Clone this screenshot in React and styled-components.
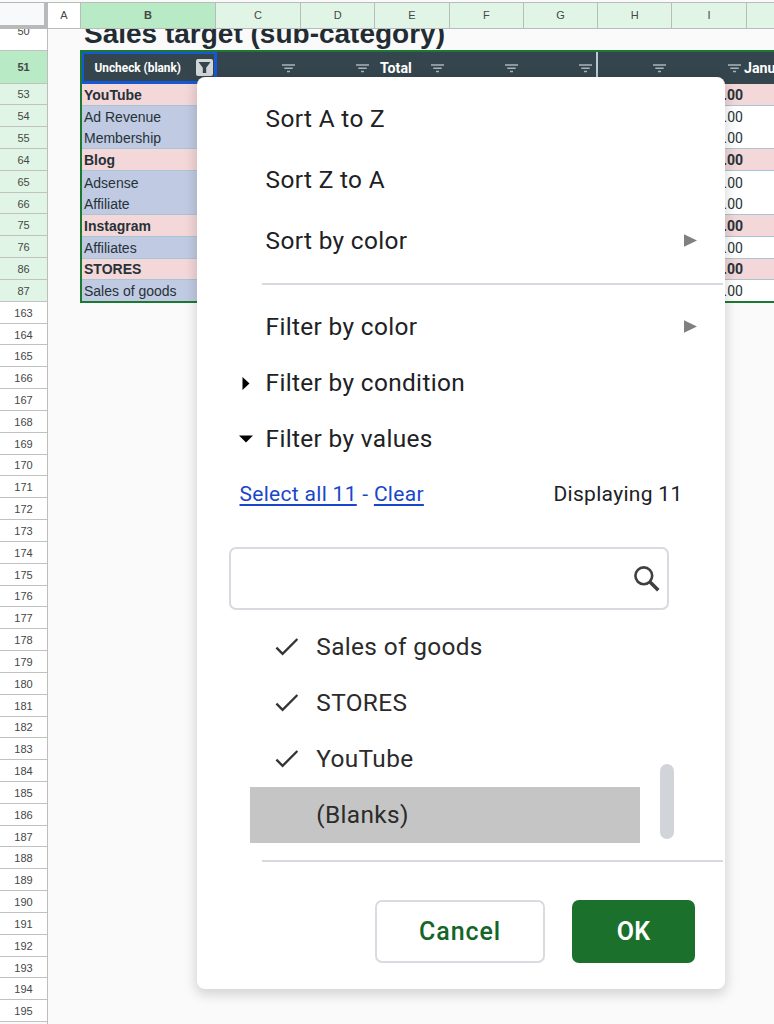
import React from "react";
import styled, { createGlobalStyle } from "styled-components";

const GlobalStyle = createGlobalStyle`
  * {
    box-sizing: border-box;
  }
  body {
    margin: 0;
    background: #fafafa;
  }
`;

const ROW = 21.84;

const Page = styled.div`
  position: relative;
  width: 774px;
  height: 1024px;
  overflow: hidden;
  background: #fafafa;
  font-family: "Liberation Sans", Arial, sans-serif;
  color: #263238;
`;

const ColumnHeader = styled.div`
  display: flex;
  height: 29px;
  border-top: 1px solid #fafafa;
  padding-top: 1px;
  background: #fafafa;
`;

const Corner = styled.div`
  flex: none;
  width: 48px;
  border-top: 1px solid #b7b7b7;
  border-right: 4px solid #b9b9b9;
  border-bottom: 4px solid #b9b9b9;
  background: #f8f9fa;
`;

const Column = styled.div`
  flex: none;
  display: flex;
  align-items: center;
  justify-content: center;
  width: ${(p) => p.$width}px;
  border: 1px solid #b9bdb9;
  border-left: none;
  padding-bottom: 1px;
  font-size: 11px;
  line-height: 12px;
  font-weight: ${(p) => (p.$tone === "active" ? "bold" : "normal")};
  color: #444746;
  background: ${(p) =>
    p.$tone === "active" ? "#b7eac5" : p.$tone === "plain" ? "#fff" : "#e1f5e6"};
`;

const Body = styled.div`
  display: flex;
  height: 995px;
  overflow: hidden;
`;

const RowNumbers = styled.div`
  flex: none;
  width: 48px;
  margin-top: -18px;
  border-right: 1px solid #bdbdbd;
`;

const RowNumber = styled.div`
  display: flex;
  align-items: center;
  justify-content: center;
  height: ${(p) => p.$height || ROW}px;
  padding-top: 1px;
  border-bottom: 1px solid #bfc2bf;
  font-size: 11px;
  font-weight: ${(p) => (p.$tone === "active" ? "bold" : "normal")};
  color: #444746;
  background: ${(p) =>
    p.$tone === "active" ? "#b7eac5" : p.$tone === "picked" ? "#e1f5e6" : "#fff"};
`;

const Cells = styled.div`
  flex: none;
  width: 760px;
  padding-left: 32px;
`;

const Title = styled.h1`
  height: 21px;
  margin: 0 0 0 4px;
  padding-top: 5px;
  font-size: 28px;
  line-height: 0;
  white-space: nowrap;
  color: #222d33;
`;

const Table = styled.div`
  border: 2px solid #1b7a32;
  border-right: none;
`;

const HeadRow = styled.div`
  position: relative;
  display: flex;
  height: 32px;
  background: #35454e;
  color: #fff;
`;

const FilterCell = styled.div`
  flex: none;
  display: flex;
  align-items: center;
  justify-content: flex-end;
  width: ${(p) => p.$width}px;
  padding: 0 ${(p) => (p.$divider ? 4 : 6)}px 0 0;
  border-right: ${(p) => (p.$divider ? "2px solid #b5cad4" : "none")};
`;

const SelectedCell = styled.div`
  flex: none;
  display: flex;
  align-items: center;
  justify-content: space-between;
  width: 135px;
  height: 32px;
  margin-right: -1px;
  padding: 0 1px 0 10.5px;
  border: 3px solid #1558d6;
  border-left-width: 2px;
  border-top-width: 2px;
  font: bold 11.85px Roboto, sans-serif;
  z-index: 1;
`;

const FilterButton = styled.span`
  display: flex;
  align-items: center;
  justify-content: center;
  width: 17px;
  height: 17px;
  border-radius: 2px;
  background: #d3d7d8;
`;

/* labels of merged cells, lying over the filter icons below them */
const MergedLabel = styled.span`
  position: absolute;
  top: 8px;
  left: ${(p) => p.$left}px;
  font: bold 14.2px/16px Roboto, sans-serif;
`;

const DataRow = styled.div`
  display: flex;
  align-items: center;
  height: ${ROW}px;
  border-bottom: ${(p) => (p.$line ? "1px solid #a9c5d3" : "none")};
  font-size: 14px;
  font-weight: ${(p) => (p.$group ? "bold" : "normal")};
  background: ${(p) => (p.$group ? "#f4d7d8" : "#fff")};

  &:last-child {
    height: 20.1px;
  }
`;

const NameCell = styled.div`
  display: flex;
  align-items: center;
  width: 134px;
  height: 100%;
  padding: 0.6px 0 0 2px;
  background: ${(p) => (p.$group ? "#f4d7d8" : "#c0cae2")};
`;

const ValueCell = styled.div`
  width: 527px;
  padding-top: 0.6px;
  text-align: right;
  font-family: Roboto, sans-serif;
  font-size: 14px;
`;

const Menu = styled.div`
  position: absolute;
  left: 197px;
  top: 77px;
  z-index: 2;
  display: flex;
  flex-direction: column;
  width: 528px;
  height: 912px;
  padding-top: 11px;
  border-radius: 8px;
  background: #fff;
  box-shadow: 0 4px 12px 2px rgba(0, 0, 0, 0.15);
  font-family: Roboto, sans-serif;
  font-size: 24.4px;
  letter-spacing: 0.35px;
  color: #202124;
`;

const MenuItem = styled.div`
  display: flex;
  align-items: center;
  height: ${(p) => p.$height}px;
  padding-right: 28px;

  .marker {
    display: flex;
    justify-content: center;
    width: 38px;
    margin-left: 30px;
  }
  .label {
    flex: 1;
    padding-left: 0.6px;
  }
`;

const Divider = styled.div`
  flex: none;
  height: 2px;
  margin: ${(p) => p.$margin};
  background: #d6d9de;
`;

const SelectBar = styled.div`
  display: flex;
  align-items: center;
  justify-content: space-between;
  height: 56px;
  padding: 0 42.5px 0 42.5px;
  font-size: 21px;
  letter-spacing: 0.3px;

  .links {
    color: #1a47c9;
  }
  a {
    color: #1a47c9;
    text-decoration: underline;
    text-decoration-thickness: 1.6px;
    text-underline-offset: 3px;
  }
`;

const SearchBox = styled.div`
  display: flex;
  align-items: center;
  justify-content: flex-end;
  width: 440px;
  height: 63px;
  margin: 25px 0 9px 32px;
  padding: 1px 7px 0 0;
  border: 2px solid #d8dae0;
  border-radius: 7px;
`;

const ValueArea = styled.div`
  display: flex;
  margin-left: 53px;
`;

const ValueList = styled.div`
  width: 389.5px;
`;

const ValueRow = styled.div`
  display: flex;
  align-items: center;
  height: 55.9px;
  color: #2b2b2b;
  background: ${(p) => (p.$hover ? "#c5c5c5" : "transparent")};

  .check {
    display: flex;
    width: 41.3px;
    margin-left: 25px;
    padding-top: 1px;
  }
`;

const Scrollbar = styled.div`
  align-self: flex-end;
  width: 14px;
  height: 75px;
  margin: 0 0 3.5px 20.6px;
  border-radius: 7px;
  background: #d1d4d9;
`;

const Actions = styled.div`
  display: flex;
  justify-content: flex-end;
  gap: 27px;
  padding-right: 30px;
`;

const Button = styled.button`
  width: ${(p) => (p.$primary ? 123 : 170)}px;
  height: 63px;
  padding: 0;
  border: ${(p) => (p.$primary ? "none" : "2px solid #d8dbe0")};
  border-radius: 7px;
  background: ${(p) => (p.$primary ? "#1b712c" : "#fff")};
  color: ${(p) => (p.$primary ? "#fff" : "#146528")};
  font: ${(p) => (p.$primary ? 600 : 500)} 25px Roboto, sans-serif;
  letter-spacing: ${(p) => (p.$primary ? 0.3 : 0.9)}px;
`;

const columns = [
  ["A", 33, "plain"],
  ["B", 135, "active"],
  ["C", 85],
  ["D", 74.3],
  ["E", 74.3],
  ["F", 74.3],
  ["G", 74.3],
  ["H", 74.3],
  ["I", 74.3],
  ["", 74.3],
];

const rows = [
  { number: 53, name: "YouTube", group: true, line: true },
  { number: 54, name: "Ad Revenue" },
  { number: 55, name: "Membership", line: true },
  { number: 64, name: "Blog", group: true, line: true },
  { number: 65, name: "Adsense" },
  { number: 66, name: "Affiliate", line: true },
  { number: 75, name: "Instagram", group: true, line: true },
  { number: 76, name: "Affiliates", line: true },
  { number: 86, name: "STORES", group: true, line: true },
  { number: 87, name: "Sales of goods" },
];

const emptyRows = Array.from({ length: 33 }, (_, i) => 163 + i);

const values = ["Sales of goods", "STORES", "YouTube"];

const FilterLines = () => (
  <svg width="13" height="9" viewBox="0 0 13 9">
    <path d="M0 1h13M2.3 4.3h8.4M5 7.6h3" stroke="#a9b4b9" strokeWidth="1.5" />
  </svg>
);

const Funnel = () => (
  <svg width="13" height="13" viewBox="0 0 13 13">
    <path d="M0.5 1h12L8.2 6.8V12H4.8V6.8z" fill="#35454e" />
  </svg>
);

const Submenu = () => (
  <svg width="13" height="13" viewBox="0 0 13 13">
    <path d="M0 0.3L13 6.5 0 12.7z" fill="#808080" />
  </svg>
);

const Closed = () => (
  <svg width="14" height="14" viewBox="0 0 14 14">
    <path d="M3.5 1L10.5 7.5 3.5 14z" fill="#000" />
  </svg>
);

const Opened = () => (
  <svg width="14" height="14" viewBox="0 0 14 14">
    <path d="M0 4.5H14L7 11.5z" fill="#000" />
  </svg>
);

const Check = () => (
  <svg width="24" height="20" viewBox="0 0 24 20">
    <path d="M1.4 10.6l6.2 6.2L22.4 2" fill="none" stroke="#333" strokeWidth="2.3" />
  </svg>
);

const Magnifier = () => (
  <svg width="26" height="26" viewBox="0 0 26 26" fill="none" stroke="#404040">
    <circle cx="9.8" cy="9.8" r="8.4" strokeWidth="2.6" />
    <path d="M16 16L24.3 24.3" strokeWidth="3.6" />
  </svg>
);

function FilterMenu() {
  return (
    <Menu>
      <MenuItem $height={61}>
        <span className="marker" />
        <span className="label">Sort A to Z</span>
      </MenuItem>
      <MenuItem $height={61}>
        <span className="marker" />
        <span className="label">Sort Z to A</span>
      </MenuItem>
      <MenuItem $height={61}>
        <span className="marker" />
        <span className="label">Sort by color</span>
        <Submenu />
      </MenuItem>
      <Divider $margin="12px 2px 13px 65px" />
      <MenuItem $height={57}>
        <span className="marker" />
        <span className="label">Filter by color</span>
        <Submenu />
      </MenuItem>
      <MenuItem $height={55}>
        <span className="marker">
          <Closed />
        </span>
        <span className="label">Filter by condition</span>
      </MenuItem>
      <MenuItem $height={56}>
        <span className="marker">
          <Opened />
        </span>
        <span className="label">Filter by values</span>
      </MenuItem>
      <SelectBar>
        <span className="links">
          <a>Select all 11</a> - <a>Clear</a>
        </span>
        <span>Displaying 11</span>
      </SelectBar>
      <SearchBox>
        <Magnifier />
      </SearchBox>
      <ValueArea>
        <ValueList>
          {values.map((value) => (
            <ValueRow key={value}>
              <span className="check">
                <Check />
              </span>
              {value}
            </ValueRow>
          ))}
          <ValueRow $hover>
            <span className="check" />
            (Blanks)
          </ValueRow>
        </ValueList>
        <Scrollbar />
      </ValueArea>
      <Divider $margin="17.4px 2px 38.5px 65px" />
      <Actions>
        <Button>Cancel</Button>
        <Button $primary>OK</Button>
      </Actions>
    </Menu>
  );
}

export default function App() {
  return (
    <Page>
      <GlobalStyle />
      <ColumnHeader>
        <Corner />
        {columns.map(([name, width, tone]) => (
          <Column key={name} $width={width} $tone={tone}>
            {name}
          </Column>
        ))}
      </ColumnHeader>
      <Body>
        <RowNumbers>
          <RowNumber $height={40}>50</RowNumber>
          <RowNumber $height={32.5} $tone="active">
            51
          </RowNumber>
          {rows.map((row) => (
            <RowNumber key={row.number} $tone="picked">
              {row.number}
            </RowNumber>
          ))}
          {emptyRows.map((number) => (
            <RowNumber key={number}>{number}</RowNumber>
          ))}
        </RowNumbers>
        <Cells>
          <Title>Sales target (sub-category)</Title>
          <Table>
            <HeadRow>
              <SelectedCell>
                Uncheck (blank)
                <FilterButton>
                  <Funnel />
                </FilterButton>
              </SelectedCell>
              {columns.slice(2).map(([name, width]) => (
                <FilterCell key={name} $width={width} $divider={name === "G"}>
                  <FilterLines />
                </FilterCell>
              ))}
              <MergedLabel $left={298}>Total</MergedLabel>
              <MergedLabel $left={662}>January</MergedLabel>
            </HeadRow>
            {rows.map((row) => (
              <DataRow key={row.number} $group={row.group} $line={row.line}>
                <NameCell $group={row.group}>{row.name}</NameCell>
                <ValueCell>.00</ValueCell>
              </DataRow>
            ))}
          </Table>
        </Cells>
      </Body>
      <FilterMenu />
    </Page>
  );
}
